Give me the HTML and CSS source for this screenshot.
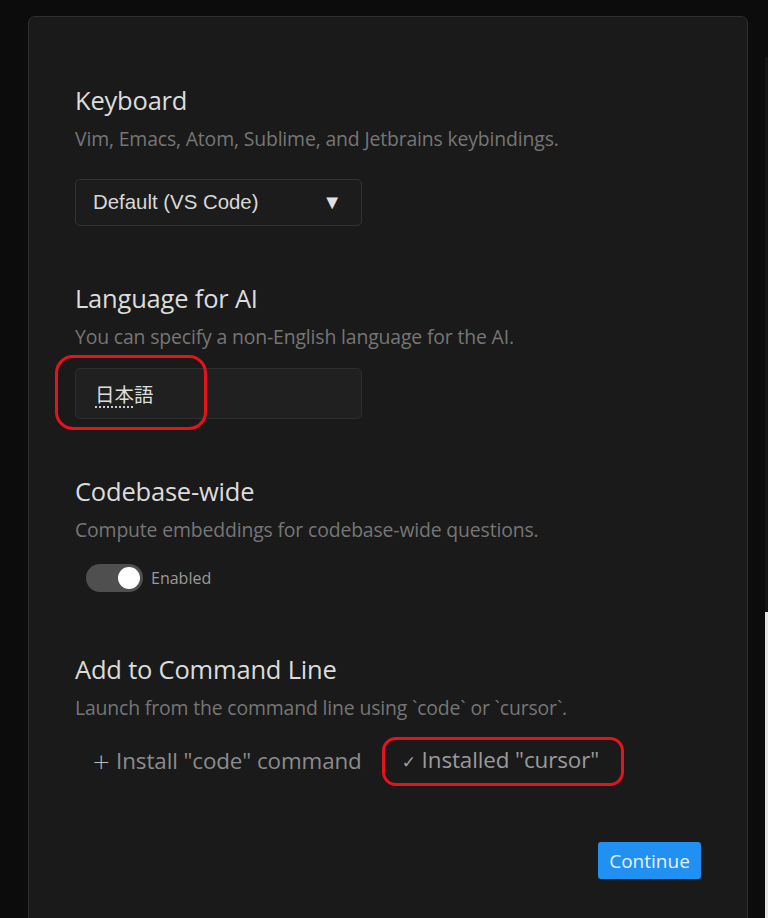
FILE: index.html
```html
<!DOCTYPE html>
<html>
<head>
<meta charset="utf-8">
<link rel="stylesheet" href="styles.css">
</head>
<body>
<div class="stage">
  <div class="card">
    <section class="sec sec-keyboard">
      <h2 class="title">Keyboard</h2>
      <p class="desc">Vim, Emacs, Atom, Sublime, and Jetbrains keybindings.</p>
      <div class="select">
        <span class="select-text">Default (VS Code)</span>
        <span class="select-arrow">▼</span>
      </div>
    </section>

    <section class="sec sec-lang">
      <h2 class="title">Language for AI</h2>
      <p class="desc">You can specify a non-English language for the AI.</p>
      <div class="input-wrap">
        <div class="input"><span class="ime"><span class="ime-u">日本</span>語</span></div>
        <div class="mark mark-input"></div>
      </div>
    </section>

    <section class="sec sec-code">
      <h2 class="title">Codebase-wide</h2>
      <p class="desc">Compute embeddings for codebase-wide questions.</p>
      <div class="toggle-row">
        <span class="toggle"><span class="knob"></span></span>
        <span class="toggle-label">Enabled</span>
      </div>
    </section>

    <section class="sec sec-cli">
      <h2 class="title">Add to Command Line</h2>
      <p class="desc">Launch from the command line using `code` or `cursor`.</p>
      <div class="cli-row">
        <span class="cli-btn"><span class="plus">+</span> Install "code" command</span>
        <span class="cli-btn cli-done"><span class="check">✓</span> Installed "cursor"<span class="mark mark-cli"></span></span>
      </div>
    </section>

    <div class="footer">
      <button class="continue">Continue</button>
    </div>
  </div>
  <div class="side">
    <div class="strip">
      <div class="strip-top"></div>
      <div class="strip-dark"></div>
      <div class="strip-light"></div>
    </div>
  </div>
</div>
</body>
</html>
```

FILE: styles.css
```css
html, body {
  margin: 0;
  padding: 0;
  background: #0c0c0c;
  height: 918px;
  overflow: hidden;
}
body {
  font-family: "Open Sans", "Noto Sans", "Noto Sans CJK JP", sans-serif;
}
.stage {
  display: flex;
  padding: 16px 0 0 28px;
  height: 902px;
}
.card {
  width: 720px;
  height: 940px;
  background: #1a1a1a;
  border: 1px solid #303030;
  border-radius: 7px;
  padding: 67px 0 0 46px;
  box-sizing: border-box;
  flex: none;
}
.side {
  flex: 1;
  margin-top: -16px;
  display: flex;
  justify-content: flex-end;
}
.strip {
  width: 3px;
  display: flex;
  flex-direction: column;
}
.strip-top {
  height: 57px;
  background: #0c0c0c;
}
.strip-dark {
  height: 555px;
  background: #151515;
}
.strip-light {
  flex: 1;
  background: #e6e6e6;
}
.sec {
  margin: 0;
}
.title {
  margin: 0;
  font-weight: 400;
  font-size: 25.5px;
  line-height: 32px;
  color: #dcdcdc;
  letter-spacing: -0.2px;
}
.desc {
  margin: 10px 0 0;
  font-size: 19.4px;
  line-height: 26px;
  color: #767676;
  letter-spacing: -0.15px;
}
.select {
  margin-top: 27px;
  width: 287px;
  height: 47px;
  box-sizing: border-box;
  border: 1px solid #333;
  border-radius: 5px;
  background: #1c1c1c;
  display: flex;
  align-items: center;
  justify-content: space-between;
  padding: 0 19px 0 17px;
  font-family: "Liberation Sans", Arial, sans-serif;
  color: #d8d8d8;
  font-size: 20.4px;
}
.select-arrow {
  font-size: 20px;
  color: #e0e0e0;
}
.sec-lang { margin-top: 56px; }
.input-wrap {
  position: relative;
  margin-top: 18px;
  width: 287px;
}
.input {
  height: 51px;
  box-sizing: border-box;
  border: 1px solid #2e2e2e;
  border-radius: 5px;
  background: #202020;
  display: flex;
  align-items: center;
  padding-left: 19px;
  font-size: 19.5px;
  color: #dedede;
  font-family: "Noto Sans CJK JP", sans-serif;
}
.ime-u {
  text-decoration: underline dotted #cfcfcf;
  text-underline-offset: 5px;
}
.mark {
  position: absolute;
  border: 3px solid #e4141d;
  border-radius: 18px;
  pointer-events: none;
  box-sizing: border-box;
}
.mark-input {
  left: -20px;
  top: -13px;
  width: 152px;
  height: 75px;
}
.sec-code { margin-top: 56px; }
.toggle-row {
  margin-top: 20px;
  display: flex;
  align-items: center;
  padding-left: 11px;
  height: 30px;
}
.toggle {
  width: 57px;
  height: 28px;
  border-radius: 14px;
  background: #4f4f4f;
  position: relative;
  box-sizing: border-box;
}
.knob {
  position: absolute;
  right: 3px;
  top: 3px;
  width: 22px;
  height: 22px;
  border-radius: 50%;
  background: #fff;
}
.toggle-label {
  margin-left: 8px;
  font-size: 16px;
  color: #9a9a9a;
}
.sec-cli { margin-top: 60px; }
.cli-row {
  margin-top: 25px;
  display: flex;
  align-items: center;
  padding-left: 17px;
  height: 30px;
}
.cli-btn {
  display: inline-block;
  font-size: 22.4px;
  line-height: 30px;
  color: #8c8c8c;
  position: relative;
  white-space: nowrap;
  letter-spacing: -0.1px;
}
.plus {
  font-family: "DejaVu Sans", sans-serif;
  font-weight: 300;
  font-size: 22px;
  color: #bdbdbd;
}
.cli-done {
  margin-left: 40px;
  color: #9a9a9a;
}
.check {
  font-family: "DejaVu Sans", sans-serif;
  font-size: 17px;
  color: #a0a0a0;
}
.mark-cli {
  left: -20px;
  top: -8px;
  width: 242px;
  height: 49px;
  border-radius: 14px;
}
.footer {
  display: flex;
  justify-content: flex-end;
  padding-right: 46px;
  margin-top: 66px;
}
.continue {
  background: #2190f3;
  border: none;
  border-radius: 3px;
  color: #e8f0fa;
  font-family: "Open Sans", sans-serif;
  font-size: 19px;
  width: 103px;
  height: 37px;
  padding: 0;
}
```
